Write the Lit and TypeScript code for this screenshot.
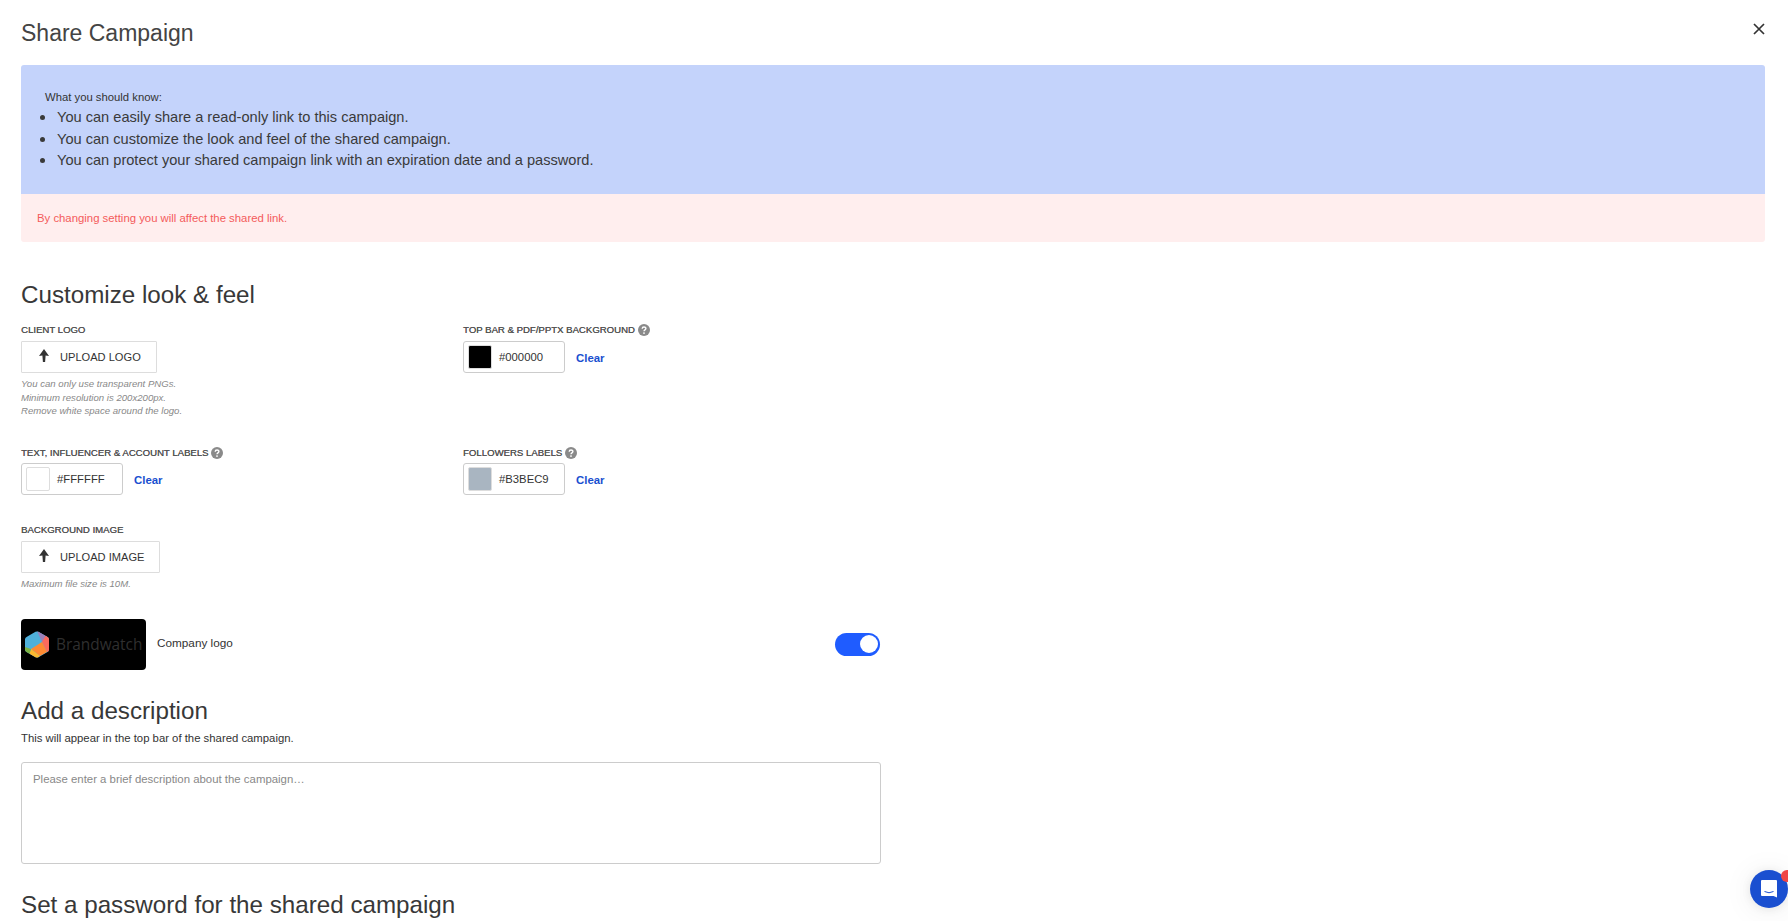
import { LitElement, html, css, svg } from "lit";
import { customElement } from "lit/decorators.js";

const arrow = html`<svg class="arrow" viewBox="0 0 12 13" width="12" height="13"><path d="M6 0 L11 7 L7.6 6.4 L7.1 13 L4.9 13 L4.4 6.4 L1 7 Z" fill="#333"/></svg>`;
const help = html`<svg class="help" viewBox="0 0 12 12" width="12" height="12"><circle cx="6" cy="6" r="6" fill="#8a8a8a"/><path d="M4.2 4.7 C4.2 2.5 7.9 2.5 7.9 4.6 C7.9 6 6 5.8 6 7.2" fill="none" stroke="#fff" stroke-width="1.4"/><circle cx="6" cy="9.1" r="0.9" fill="#fff"/></svg>`;

@customElement("app-root")
export class AppRoot extends LitElement {
  static styles = css`
    :host { display: block; height: 921px; overflow: hidden; position: relative; background: #fff; font-family: "Liberation Sans", Arial, sans-serif; color: #333; }
    * { box-sizing: border-box; }
    .page { padding: 0 23px 0 21px; }
    .head { height: 65px; display: flex; justify-content: space-between; align-items: flex-start; }
    h1 { margin: 18px 0 0; font-size: 23px; line-height: 30px; font-weight: 400; color: #444; }
    .close { margin: 23px 0 0 0; width: 12px; height: 12px; display: block; }
    .info { background: #c4d3fb; height: 129px; border-radius: 3px 3px 0 0; padding: 24px 0 0 24px; font-size: 11.3px; }
    .info p { margin: 0; line-height: 17px; color: #333; }
    .info ul { margin: 0; padding: 0 0 0 12px; font-size: 14.6px; line-height: 20.6px; color: #3a3a3a; }
    .info li::marker { font-size: 18px; }
    .warn { background: #ffeeee; color: #f45b5b; height: 48px; border-radius: 0 0 3px 3px; padding: 0 16px; display: flex; align-items: center; font-size: 11.35px; }
    h2 { margin: 0; font-size: 24.2px; line-height: 30px; font-weight: 400; color: #383838; }
    .custom { margin-top: 38px; }
    .grid { display: grid; grid-template-columns: 442px 1fr; margin-top: 12px; }
    .field { display: flex; flex-direction: column; align-items: flex-start; }
    .tall { height: 122px; }
    .mid { height: 78px; }
    .mid .label { margin-top: 1px; margin-bottom: 3px; }
    .label { font-size: 9.6px; line-height: 14px; font-weight: 400; color: #555; display: flex; align-items: center; gap: 3px; height: 15px; margin-bottom: 4px; text-shadow: 0.2px 0 0 #555; }
    .help { display: block; }
    .upload { height: 32px; padding: 0 15px 0 16px; display: inline-flex; align-items: center; gap: 10px; background: #fff; border: 1px solid #ddd; border-radius: 1px; font: 11.1px "Liberation Sans", Arial, sans-serif; color: #333; }
    .arrow { margin-bottom: 3px; }
    .note { margin: 4px 0 0; font-size: 9.6px; line-height: 13.5px; font-style: italic; color: #888; }
    .colorrow { display: flex; align-items: center; gap: 11px; }
    .color { width: 102px; height: 32px; border: 1px solid #ccc; border-radius: 3px; display: flex; align-items: center; padding-left: 4px; gap: 7px; font-size: 11.3px; color: #333; }
    .swatch { width: 24px; height: 24px; border: 1px solid #ddd; border-radius: 2px; display: block; flex: none; }
    .clear { font-size: 11.4px; font-weight: 700; color: #1a4fd0; text-decoration: none; padding-top: 1px; }
    .logorow { margin-top: 28px; width: 860px; display: flex; align-items: center; gap: 11px; height: 51px; font-size: 11.75px; }
    .logo { width: 125px; height: 51px; background: #000; border-radius: 4px; display: flex; align-items: center; gap: 7px; padding-left: 4px; flex: none; overflow: hidden; }
    .logo svg { flex: none; }
    .logo span { font-family: "Open Sans", sans-serif; font-size: 15.4px; color: #2f2f2f; white-space: nowrap; }
    .logoname { padding-bottom: 3px; }
    .switch { margin-left: auto; margin-right: 1px; width: 45px; height: 23px; border-radius: 12px; background: #1f5cff; display: flex; align-items: center; justify-content: flex-end; padding-right: 2px; }
    .knob { width: 18px; height: 18px; border-radius: 50%; background: #fff; }
    .desc { margin-top: 26px; }
    .sub { margin: 4px 0 0; font-size: 11.34px; line-height: 16px; color: #333; }
    textarea { display: block; margin-top: 16px; width: 860px; height: 102px; border: 1px solid #ccc; border-radius: 3px; padding: 8px 11px; resize: none; font: 11.4px/16px "Liberation Sans", Arial, sans-serif; outline: none; }
    textarea::placeholder { color: #888; opacity: 1; }
    .pass { margin-top: 26px; }
    .chat { position: absolute; left: 1750px; top: 870px; width: 38px; height: 38px; border-radius: 50%; background: #1a4fd0; box-shadow: 0 1px 10px rgba(0,0,0,.08), 0 2px 30px rgba(0,0,0,.08); display: flex; align-items: center; justify-content: center; }
    .badge { position: absolute; left: 31px; top: 0; width: 12px; height: 12px; border-radius: 50%; background: #f04545; }
  `;

  private color(hex: string, fill: string) {
    return html`<div class="colorrow"><div class="color"><span class="swatch" style="background:${fill}"></span><span>${hex}</span></div><a class="clear" href="#">Clear</a></div>`;
  }

  render() {
    return html`
      <div class="page">
        <div class="head">
          <h1>Share Campaign</h1>
          <svg class="close" viewBox="0 0 12 12"><path d="M1 1 L11 11 M11 1 L1 11" stroke="#333" stroke-width="1.7" fill="none"/></svg>
        </div>
        <div class="info">
          <p>What you should know:</p>
          <ul>
            <li>You can easily share a read-only link to this campaign.</li>
            <li>You can customize the look and feel of the shared campaign.</li>
            <li>You can protect your shared campaign link with an expiration date and a password.</li>
          </ul>
        </div>
        <div class="warn">By changing setting you will affect the shared link.</div>

        <h2 class="custom">Customize look &amp; feel</h2>
        <div class="grid">
          <div class="field tall">
            <div class="label">CLIENT LOGO</div>
            <button class="upload">${arrow}UPLOAD LOGO</button>
            <p class="note">You can only use transparent PNGs.<br />Minimum resolution is 200x200px.<br />Remove white space around the logo.</p>
          </div>
          <div class="field tall">
            <div class="label">TOP BAR &amp; PDF/PPTX BACKGROUND ${help}</div>
            ${this.color("#000000", "#000")}
          </div>
          <div class="field mid"><div class="label">TEXT, INFLUENCER &amp; ACCOUNT LABELS ${help}</div>${this.color("#FFFFFF", "#fff")}</div>
          <div class="field mid"><div class="label">FOLLOWERS LABELS ${help}</div>${this.color("#B3BEC9", "#a9b5c1")}</div>
          <div class="field">
            <div class="label">BACKGROUND IMAGE</div>
            <button class="upload">${arrow}UPLOAD IMAGE</button>
            <p class="note">Maximum file size is 10M.</p>
          </div>
        </div>

        <div class="logorow">
          <div class="logo">
            <svg width="24" height="27" viewBox="0 0 24 27">
              ${svg`<clipPath id="hex"><path d="M10.5 0.8 Q12 0 13.5 0.8 L22.5 5.9 Q24 6.7 24 8.4 V18.6 Q24 20.3 22.5 21.1 L13.5 26.2 Q12 27 10.5 26.2 L1.5 21.1 Q0 20.3 0 18.6 V8.4 Q0 6.7 1.5 5.9 Z"/></clipPath>
              <g clip-path="url(#hex)">
              <rect width="24" height="27" fill="#4fb0da"/>
              <polygon points="12,0 21,4 24,6.7 17,11" fill="#9b7fb8"/>
              <polygon points="21,4 24,6 24,21 22,21 17,11" fill="#fb6a5d"/>
              <polygon points="17,11 22,21 15,25 6,18" fill="#ff8a33"/>
              <polygon points="6,18 15,25 12,28 4,24" fill="#fdb92e"/>
              <polygon points="0,16 6,18 4,24 0,21" fill="#7cb342"/>
              </g>`}
            </svg>
            <span>Brandwatch</span>
          </div>
          <span class="logoname">Company logo</span>
          <div class="switch"><div class="knob"></div></div>
        </div>

        <h2 class="desc">Add a description</h2>
        <p class="sub">This will appear in the top bar of the shared campaign.</p>
        <textarea placeholder="Please enter a brief description about the campaign…"></textarea>
        <h2 class="pass">Set a password for the shared campaign</h2>
      </div>
      <div class="chat">
        <svg width="18" height="20" viewBox="0 0 18 20"><path d="M2 1 H16 Q17 1 17 2 V18.5 L13.5 17 H2 Q1 17 1 16 V2 Q1 1 2 1 Z" fill="#fff"/><path d="M4.5 12.5 Q9 15 13.5 12.5" stroke="#1a4fd0" stroke-width="1" fill="none"/></svg>
        <span class="badge"></span>
      </div>
    `;
  }
}
